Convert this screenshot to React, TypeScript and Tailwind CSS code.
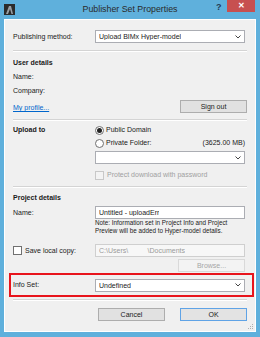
import { ReactNode } from 'react';

const Chevron = () => (
  <svg width="6" height="4" viewBox="0 0 6 4" className="ml-auto shrink-0">
    <polyline points="0.5,0.5 3,3 5.5,0.5" fill="none" stroke="#444" strokeWidth="1" />
  </svg>
);

function Field({ children, chevron, disabled }: { children?: ReactNode; chevron?: boolean; disabled?: boolean }) {
  return (
    <div
      className={`flex h-[13px] w-[150px] items-center border px-[3px] text-[7px] leading-none ${
        disabled ? 'border-[#cfcfcf] bg-[#f7f7f7] text-[#9a9a9a]' : 'border-[#abadb3] bg-white text-[#1a1a1a]'
      }`}
    >
      <span className="truncate">{children}</span>
      {chevron && <Chevron />}
    </div>
  );
}

function Btn({ children, primary, disabled }: { children: ReactNode; primary?: boolean; disabled?: boolean }) {
  return (
    <div
      className={`flex h-[13px] w-[67px] items-center justify-center border text-[7px] leading-none ${
        disabled
          ? 'border-[#d9d9d9] bg-[#f3f3f3] text-[#a6a6a6]'
          : primary
            ? 'border-[#5fa3e6] bg-[#e3e3e3] text-[#1a1a1a]'
            : 'border-[#adadad] bg-[#e1e1e1] text-[#1a1a1a]'
      }`}
    >
      {children}
    </div>
  );
}

const Sep = () => <div className="h-[2px] border-t border-b border-t-[#d4d4d4] border-b-white" />;

const Radio = ({ on }: { on?: boolean }) => (
  <span className="flex h-[9px] w-[9px] shrink-0 items-center justify-center rounded-full border border-[#707070] bg-white">
    {on && <span className="h-[5px] w-[5px] rounded-full bg-[#222]" />}
  </span>
);

const Check = ({ disabled }: { disabled?: boolean }) => (
  <span className={`h-[9px] w-[9px] shrink-0 border ${disabled ? 'border-[#c8c8c8] bg-[#f3f3f3]' : 'border-[#707070] bg-white'}`} />
);

export default function App() {
  return (
    <div className="flex h-[337px] w-[260px] flex-col bg-[#5fb0dc] font-['Liberation_Sans',Arial,sans-serif] text-[#1a1a1a]">
      {/* title bar */}
      <div className="relative flex h-[19px] shrink-0 items-center justify-center">
        <svg width="11" height="11" viewBox="0 0 11 11" className="absolute left-[4px] top-[4px]">
          <rect width="11" height="11" fill="#2b2b2b" />
          <path d="M2 10 L5 2 L7 2 L9 10 L7.5 10 L6 5 L4 10 Z" fill="#9aa0a6" />
        </svg>
        <span className="text-[8.8px] text-[#2a2a2a]">Publisher Set Properties</span>
        <span className="absolute left-[216px] top-[1px] text-[9px] font-bold text-[#1f3a55]">?</span>
        <div className="absolute left-[227px] top-0 flex h-[12px] w-[28px] items-center justify-center bg-[#c75050] text-[8px] font-bold text-white">
          ✕
        </div>
      </div>

      {/* body */}
      <div className="mx-[4px] mb-[5px] flex flex-1 flex-col border border-white bg-[#f0f0f0] pl-[8px] pr-[8px] text-[7px] leading-[10px]">
        <div className="mt-[10px] flex items-center">
          <span className="w-[82px]">Publishing method:</span>
          <Field chevron>Upload BIMx Hyper-model</Field>
        </div>
        <div className="mt-[7px]">
          <Sep />
        </div>

        <div className="mt-[6px] font-bold">User details</div>
        <div className="mt-[4px]">Name:</div>
        <div className="mt-[4px]">Company:</div>
        <div className="mt-[3px] flex items-center justify-between">
          <span className="mt-[4px] text-[#0066cc] underline">My profile...</span>
          <Btn>Sign out</Btn>
        </div>
        <div className="mt-[6px]">
          <Sep />
        </div>

        <div className="mt-[4px] flex">
          <span className="w-[82px] font-bold">Upload to</span>
          <div className="flex w-[150px] flex-col">
            <div className="flex items-center gap-[2px]">
              <Radio on />
              <span>Public Domain</span>
            </div>
            <div className="mt-[3px] flex items-center gap-[2px]">
              <Radio />
              <span>Private Folder:</span>
              <span className="ml-auto">(3625.00 MB)</span>
            </div>
            <div className="mt-[3px]">
              <Field chevron />
            </div>
            <div className="mt-[6px] flex items-center gap-[3px] text-[#a0a0a0]">
              <Check disabled />
              <span>Protect download with password</span>
            </div>
          </div>
        </div>
        <div className="mt-[6px]">
          <Sep />
        </div>

        <div className="mt-[5px] font-bold">Project details</div>
        <div className="mt-[3px] flex">
          <span className="w-[82px] leading-[13px]">Name:</span>
          <div className="flex w-[150px] flex-col">
            <Field>Untitled - uploadErr</Field>
            <p className="text-[6.3px] leading-[8px]">
              Note: Information set in Project Info and Project Preview will be added to Hyper-model details.
            </p>
          </div>
        </div>

        <div className="mt-[9px] flex">
          <div className="flex w-[82px] items-center gap-[3px] self-start leading-[13px]">
            <Check />
            <span>Save local copy:</span>
          </div>
          <div className="flex w-[150px] flex-col items-end">
            <Field disabled>
              C:\Users\&nbsp;&nbsp;&nbsp;&nbsp;&nbsp;&nbsp;&nbsp;&nbsp;&nbsp;&nbsp;\Documents
            </Field>
            <div className="mt-[2px]">
              <Btn disabled>Browse...</Btn>
            </div>
          </div>
        </div>

        <div className="mt-[1px] -ml-[4px] -mr-[7px] flex h-[24px] items-center border-2 border-[#e8141c] pl-[2px] pr-[5px]">
          <span className="w-[82px]">Info Set:</span>
          <Field chevron>Undefined</Field>
        </div>
        <div className="mt-[2px]">
          <Sep />
        </div>

        <div className="mt-[7px] flex justify-end gap-[15px]">
          <Btn>Cancel</Btn>
          <Btn primary>OK</Btn>
        </div>
        <svg width="6" height="6" viewBox="0 0 6 6" className="ml-auto mr-[-7px] mt-auto mb-[1px]">
          <rect x="4" y="0" width="1" height="1" fill="#b0b0b0" />
          <rect x="2" y="2" width="1" height="1" fill="#b0b0b0" />
          <rect x="4" y="2" width="1" height="1" fill="#b0b0b0" />
          <rect x="0" y="4" width="1" height="1" fill="#b0b0b0" />
          <rect x="2" y="4" width="1" height="1" fill="#b0b0b0" />
          <rect x="4" y="4" width="1" height="1" fill="#b0b0b0" />
        </svg>
      </div>
    </div>
  );
}
